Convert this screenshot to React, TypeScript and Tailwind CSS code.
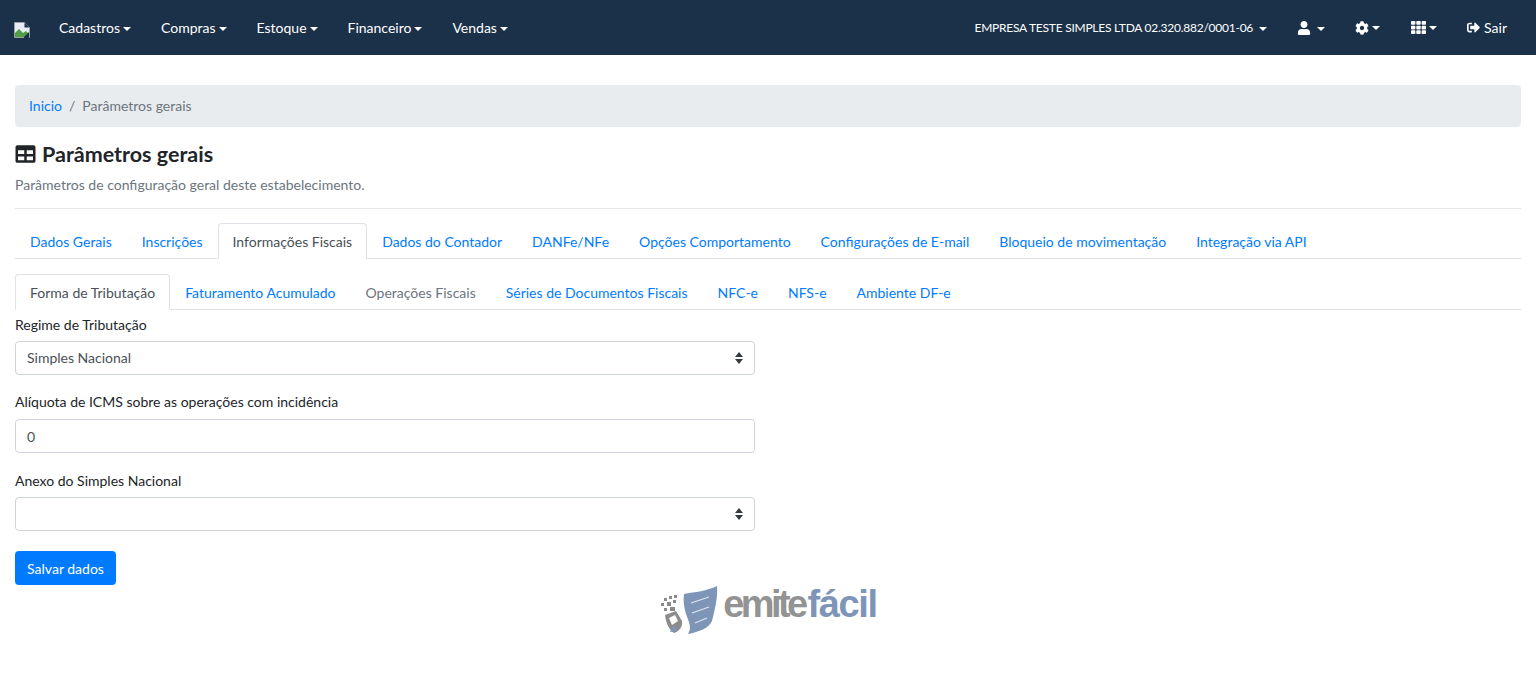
import { ReactNode } from 'react'
import { FaCog, FaSignOutAlt, FaTable, FaTh, FaUser } from 'react-icons/fa'

const mainMenu = ['Cadastros', 'Compras', 'Estoque', 'Financeiro', 'Vendas']

const mainTabs = [
  'Dados Gerais',
  'Inscrições',
  'Informações Fiscais',
  'Dados do Contador',
  'DANFe/NFe',
  'Opções Comportamento',
  'Configurações de E-mail',
  'Bloqueio de movimentação',
  'Integração via API',
]

const subTabs = [
  'Forma de Tributação',
  'Faturamento Acumulado',
  'Operações Fiscais',
  'Séries de Documentos Fiscais',
  'NFC-e',
  'NFS-e',
  'Ambiente DF-e',
]

function Caret() {
  return <span className="ml-[3px] inline-block h-0 w-0 border-x-[4.5px] border-t-[4.5px] border-x-transparent border-t-white align-middle" />
}

function BrokenImage() {
  return (
    <svg width="16" height="16" viewBox="0 0 16 16" className="mt-[4px] shrink-0">
      <path d="M0.5 0.5H10.5L15.5 5.5V15.5H0.5Z" fill="#e8edf3" stroke="#9aa0a6" />
      <path d="M1 15V11L5 7L9 11L12 9L15 12V15Z" fill="#4f9e44" />
      <path d="M10 15L15 10V16H10Z" fill="#1b3049" />
      <path d="M10.5 0.5V5.5H15.5Z" fill="#1b3049" />
    </svg>
  )
}

function Logo() {
  return (
    <div className="flex items-center justify-center">
      <div className="flex h-[52px] items-center">
        <svg width="62" height="52" viewBox="4 0 62 52" className="shrink-0">
          <g fill="#8a8a8a">
            <rect x="9" y="13" width="3" height="3" />
            <rect x="14" y="11" width="3" height="3" />
            <rect x="19" y="10" width="3" height="3" />
            <rect x="6" y="18" width="3" height="3" />
            <rect x="12" y="17" width="4" height="4" />
            <rect x="18" y="15" width="3" height="3" />
            <rect x="9" y="23" width="3" height="3" />
            <rect x="15" y="22" width="5" height="4" />
          </g>
          <path d="M10 30L21 26L27 36C28 42 24 46 19 48C14 45 11 38 10 30Z" fill="#8c8c8c" />
          <path d="M14 33L20 30L23 36L17 40Z" fill="#ffffff" />
          <path d="M15 47L18 40L22 46Z" fill="#7e95b8" />
          <path d="M29 9C40 7 52 6 62 1C63 12 60 24 57 36C54 43 44 47 33 49C37 43 34 37 31 29C29 23 28 15 29 9Z" fill="#7e95b8" />
          <path d="M36 18L54 12M37 28L54 22M40 38L52 33" stroke="#dfe6f0" strokeWidth="1.2" fill="none" />
        </svg>
        <div className="mb-[14px] ml-[2px] flex font-['Liberation_Sans',sans-serif] text-[38px] leading-none font-bold">
          <span className="tracking-[-3.6px] text-[#939393]">emite</span>
          <span className="ml-[3px] tracking-[-1.4px] text-[#7e95b8]">fácil</span>
        </div>
      </div>
    </div>
  )
}

function Tabs({ items, active, muted }: { items: string[]; active: string; muted?: string }) {
  return (
    <ul className="flex border-b border-[#dee2e6]">
      {items.map((item) => (
        <li key={item} className="-mb-px">
          <a
            className={
              item === active
                ? 'block rounded-t-[4px] border border-[#dee2e6] border-b-white bg-white px-[14px] pt-[9px] pb-[7px] leading-[18px] text-[#495057]'
                : item === muted
                  ? 'block border border-transparent px-[14px] pt-[9px] pb-[7px] leading-[18px] text-[#6c757d]'
                  : 'block border border-transparent px-[14px] pt-[9px] pb-[7px] leading-[18px] text-[#007bff]'
            }
          >
            {item}
          </a>
        </li>
      ))}
    </ul>
  )
}

function Field({ label, className, children }: { label: string; className?: string; children: ReactNode }) {
  return (
    <div className={className}>
      <label className="mb-[6px] block h-[19px] leading-[18px] text-[#212529]">{label}</label>
      {children}
    </div>
  )
}

function SelectBox({ value, options }: { value: string; options: string[] }) {
  return (
    <div className="relative w-[740px]">
      <select
        defaultValue={value}
        className="block h-[34px] w-full appearance-none rounded-[4px] border border-[#ced4da] bg-white px-[11px] pb-[2px] text-[#495057]"
      >
        {options.map((o) => (
          <option key={o}>{o}</option>
        ))}
      </select>
      <svg width="8" height="12" viewBox="0 0 8 12" className="pointer-events-none absolute top-[11px] right-[12px]">
        <path d="M4 0L8 5H0Z M4 12L0 7H8Z" fill="#343a40" />
      </svg>
    </div>
  )
}

export default function App() {
  return (
    <div className="min-h-[686px] bg-white font-['Lato',sans-serif] text-[14px] text-[#212529]">
      <nav className="flex h-[55px] items-center bg-[#1b3049] pr-[29px] pl-[14px] text-white">
        <BrokenImage />
        <ul className="ml-[14px] flex">
          {mainMenu.map((m) => (
            <li key={m} className="px-[15px]">
              {m}
              <Caret />
            </li>
          ))}
        </ul>
        <div className="ml-auto flex items-center">
          <span className="pt-px text-[12px] tracking-[-0.25px]">EMPRESA TESTE SIMPLES LTDA 02.320.882/0001-06</span>
          <span className="ml-[3px]">
            <Caret />
          </span>
          <span className="ml-[30px] flex items-center">
            <FaUser className="h-[14px] w-[14px]" />
            <span className="ml-[3px]">
              <Caret />
            </span>
          </span>
          <span className="ml-[30px] flex items-center">
            <FaCog className="h-[14px] w-[14px]" />
            <Caret />
          </span>
          <span className="ml-[31px] flex items-center">
            <FaTh className="h-[15px] w-[15px]" />
            <Caret />
          </span>
          <span className="ml-[30px] flex items-center">
            <FaSignOutAlt className="mr-[4px] h-[13px] w-[13px]" />
            Sair
          </span>
        </div>
      </nav>

      <main className="px-[15px] pt-[30px]">
        <div className="flex h-[42px] items-center rounded-[4px] bg-[#e9ecef] px-[14px] pb-[2px]">
          <a className="text-[#007bff]">Inicio</a>
          <span className="px-[7px] text-[#6c757d]">/</span>
          <span className="text-[#6c757d]">Parâmetros gerais</span>
        </div>

        <h1 className="mt-[14px] flex h-[26px] items-center text-[21.5px] font-bold text-[#212529]">
          <FaTable className="mr-[6px] h-[20px] w-[21px]" />
          Parâmetros gerais
        </h1>
        <p className="mt-[8px] h-[19px] leading-[19px] text-[#6c757d]">Parâmetros de configuração geral deste estabelecimento.</p>
        <hr className="mt-[14px] border-[#e5e7ea]" />

        <div className="mt-[14px]">
          <Tabs items={mainTabs} active="Informações Fiscais" />
        </div>
        <div className="mt-[15px]">
          <Tabs items={subTabs} active="Forma de Tributação" muted="Operações Fiscais" />
        </div>

        <Field label="Regime de Tributação" className="mt-[6px]">
          <SelectBox value="Simples Nacional" options={['Simples Nacional', 'Regime Normal']} />
        </Field>
        <Field label="Alíquota de ICMS sobre as operações com incidência" className="mt-[18px]">
          <div className="pt-px">
            <input
              defaultValue="0"
              className="block h-[34px] w-[740px] rounded-[4px] border border-[#ced4da] bg-white px-[11px] text-[#495057]"
            />
          </div>
        </Field>
        <Field label="Anexo do Simples Nacional" className="mt-[19px]">
          <SelectBox value="" options={['', 'Anexo I', 'Anexo II', 'Anexo III']} />
        </Field>

        <button className="mt-[20px] block h-[34px] w-[101px] rounded-[4px] bg-[#007bff] text-white">Salvar dados</button>
        <Logo />
      </main>
    </div>
  )
}
